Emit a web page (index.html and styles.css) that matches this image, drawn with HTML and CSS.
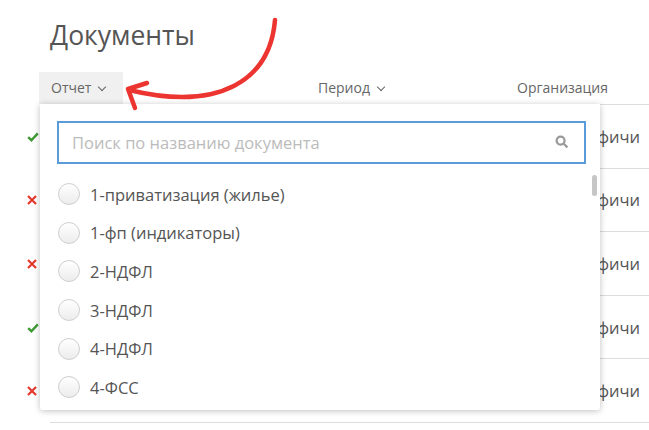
FILE: index.html
```html
<!DOCTYPE html>
<html lang="ru">
<head>
  <meta charset="UTF-8">
  <title>Документы</title>
  <link rel="stylesheet" href="styles.css">
</head>
<body>

  <div class="page">
    <h1 class="title">Документы</h1>

    <!-- шапка таблицы -->
    <div class="head">
      <div class="col col-report"><button class="head-btn active">Отчет <span class="caret"></span></button></div>
      <div class="col col-period"><button class="head-btn">Период <span class="caret"></span></button></div>
      <div class="col col-org">Организация</div>
    </div>

    <!-- строки -->
    <div class="row">
      <div class="status ok"><svg width="12" height="10" viewBox="0 0 12 10"><path d="M1.2 5.2L4.4 8.2L10.8 1.4"/></svg></div>
      <div class="cells"><div class="col col-report">1-приватизация</div><div class="col col-period">2019</div><div class="col col-org">Команда фичи</div></div>
    </div>
    <div class="row">
      <div class="status fail"><svg width="10" height="10" viewBox="0 0 10 10"><path d="M1 1L9 9M9 1L1 9"/></svg></div>
      <div class="cells"><div class="col col-report">1-фп</div><div class="col col-period">2019</div><div class="col col-org">Команда фичи</div></div>
    </div>
    <div class="row">
      <div class="status fail"><svg width="10" height="10" viewBox="0 0 10 10"><path d="M1 1L9 9M9 1L1 9"/></svg></div>
      <div class="cells"><div class="col col-report">2-НДФЛ</div><div class="col col-period">2019</div><div class="col col-org">Команда фичи</div></div>
    </div>
    <div class="row">
      <div class="status ok"><svg width="12" height="10" viewBox="0 0 12 10"><path d="M1.2 5.2L4.4 8.2L10.8 1.4"/></svg></div>
      <div class="cells"><div class="col col-report">3-НДФЛ</div><div class="col col-period">2019</div><div class="col col-org">Команда фичи</div></div>
    </div>
    <div class="row">
      <div class="status fail"><svg width="10" height="10" viewBox="0 0 10 10"><path d="M1 1L9 9M9 1L1 9"/></svg></div>
      <div class="cells"><div class="col col-report">4-ФСС</div><div class="col col-period">2019</div><div class="col col-org">Команда фичи</div></div>
    </div>

    <!-- выпадающий фильтр по отчету -->
    <div class="dropdown">
      <div class="search">
        <input type="text" placeholder="Поиск по названию документа">
        <svg class="search-ico" width="14" height="14" viewBox="0 0 14 14"><circle cx="5.6" cy="5.6" r="4"/><path d="M8.7 8.7L12.4 12.4"/></svg>
      </div>
      <ul class="options">
        <li><span class="radio"></span>1-приватизация (жилье)</li>
        <li><span class="radio"></span>1-фп (индикаторы)</li>
        <li><span class="radio"></span>2-НДФЛ</li>
        <li><span class="radio"></span>3-НДФЛ</li>
        <li><span class="radio"></span>4-НДФЛ</li>
        <li><span class="radio"></span>4-ФСС</li>
      </ul>
      <div class="thumb"></div>
    </div>
  </div>

  <!-- стрелка-подсказка -->
  <svg class="arrow" width="649" height="430" viewBox="0 0 649 430">
    <path d="M275 20C270 80 220 112 129 90"/>
    <path d="M147 83L128 89L135 108"/>
  </svg>

</body>
</html>
```

FILE: styles.css
```css
*,*::before,*::after{margin:0;padding:0;box-sizing:border-box}
html,body{
  width:100%;height:100%;
  overflow:hidden;
  background:#fff;
  font-family:"Open Sans",Arial,sans-serif;
  color:#555;
}

.page{
  position:relative;
  padding-left:50px;
}

.title{
  font-size:26.5px;
  font-weight:400;
  line-height:31px;
  padding-top:20px;
  margin-bottom:21px;
  color:#555;
}

/* ===== ТАБЛИЦА ===== */
.head{
  display:flex;
  height:33px;
  border-bottom:1px solid #ddd;
  font-size:14px;
  line-height:32px;
  color:#666;
}
.col-report{width:268px}
.col-period{width:199px}
.col-org{flex:1;white-space:nowrap;overflow:hidden}

.head-btn{
  font:inherit;
  color:inherit;
  background:none;
  border:none;
  height:32px;
  line-height:32px;
  display:flex;
  align-items:center;
  gap:8px;
}
.head-btn.active{
  background:#f0f0f0;
  margin-left:-11px;
  padding:0 12px;
  width:84px;
}
.caret{
  width:6px;height:6px;
  border-right:1.5px solid #666;
  border-bottom:1.5px solid #666;
  transform:rotate(45deg);
  margin-top:-3px;
}

.row{
  display:flex;
  height:63.6px;
  margin-left:-50px;
}
.status{
  width:50px;
  display:flex;
  align-items:center;
  padding-left:27px;
}
.status svg{fill:none;stroke-width:2.4}
.status.ok svg{stroke:#3f9a35}
.status.fail svg{stroke:#e5392f;stroke-width:2.2}
.cells{
  flex:1;
  display:flex;
  align-items:center;
  border-bottom:1px solid #ddd;
  font-size:16.5px;
  color:#555;
}
.cells .col-org{text-align:right;padding-right:9px}

/* ===== ВЫПАДАЮЩИЙ СПИСОК ===== */
.dropdown{
  position:absolute;
  top:104px;left:40px;
  width:560px;height:306px;
  background:#fff;
  box-shadow:0 1px 6px rgba(0,0,0,.25);
  border-radius:0 0 3px 3px;
  padding:17px 14px 0 17px;
  z-index:2;
}
.search{position:relative}
.search input{
  width:100%;
  height:43px;
  border:2px solid #5b9bd9;
  padding:0 40px 0 13px;
  font:inherit;
  font-size:16.5px;
  color:#555;
  outline:none;
}
.search input::placeholder{color:#bbb}
.search-ico{
  position:absolute;
  right:17px;top:14px;
  fill:none;stroke:#999;stroke-width:2.2;
}
.options{
  list-style:none;
  margin-top:11px;
}
.options li{
  display:flex;
  align-items:center;
  gap:10px;
  height:38.6px;
  font-size:16.5px;
  color:#555;
  padding-left:1px;
}
.radio{
  width:22px;height:22px;
  border-radius:50%;
  border:1px solid #cfcfcf;
  background:linear-gradient(#fff,#ececec);
}
.thumb{
  position:absolute;
  right:3px;top:71px;
  width:5px;height:21px;
  border-radius:3px;
  background:#c6c6c6;
}

/* ===== СТРЕЛКА ===== */
.arrow{
  position:absolute;
  top:0;left:0;
  z-index:5;
  pointer-events:none;
  fill:none;
  stroke:#ec3530;
  stroke-width:4.5;
  stroke-linecap:round;
  stroke-linejoin:round;
}
```
